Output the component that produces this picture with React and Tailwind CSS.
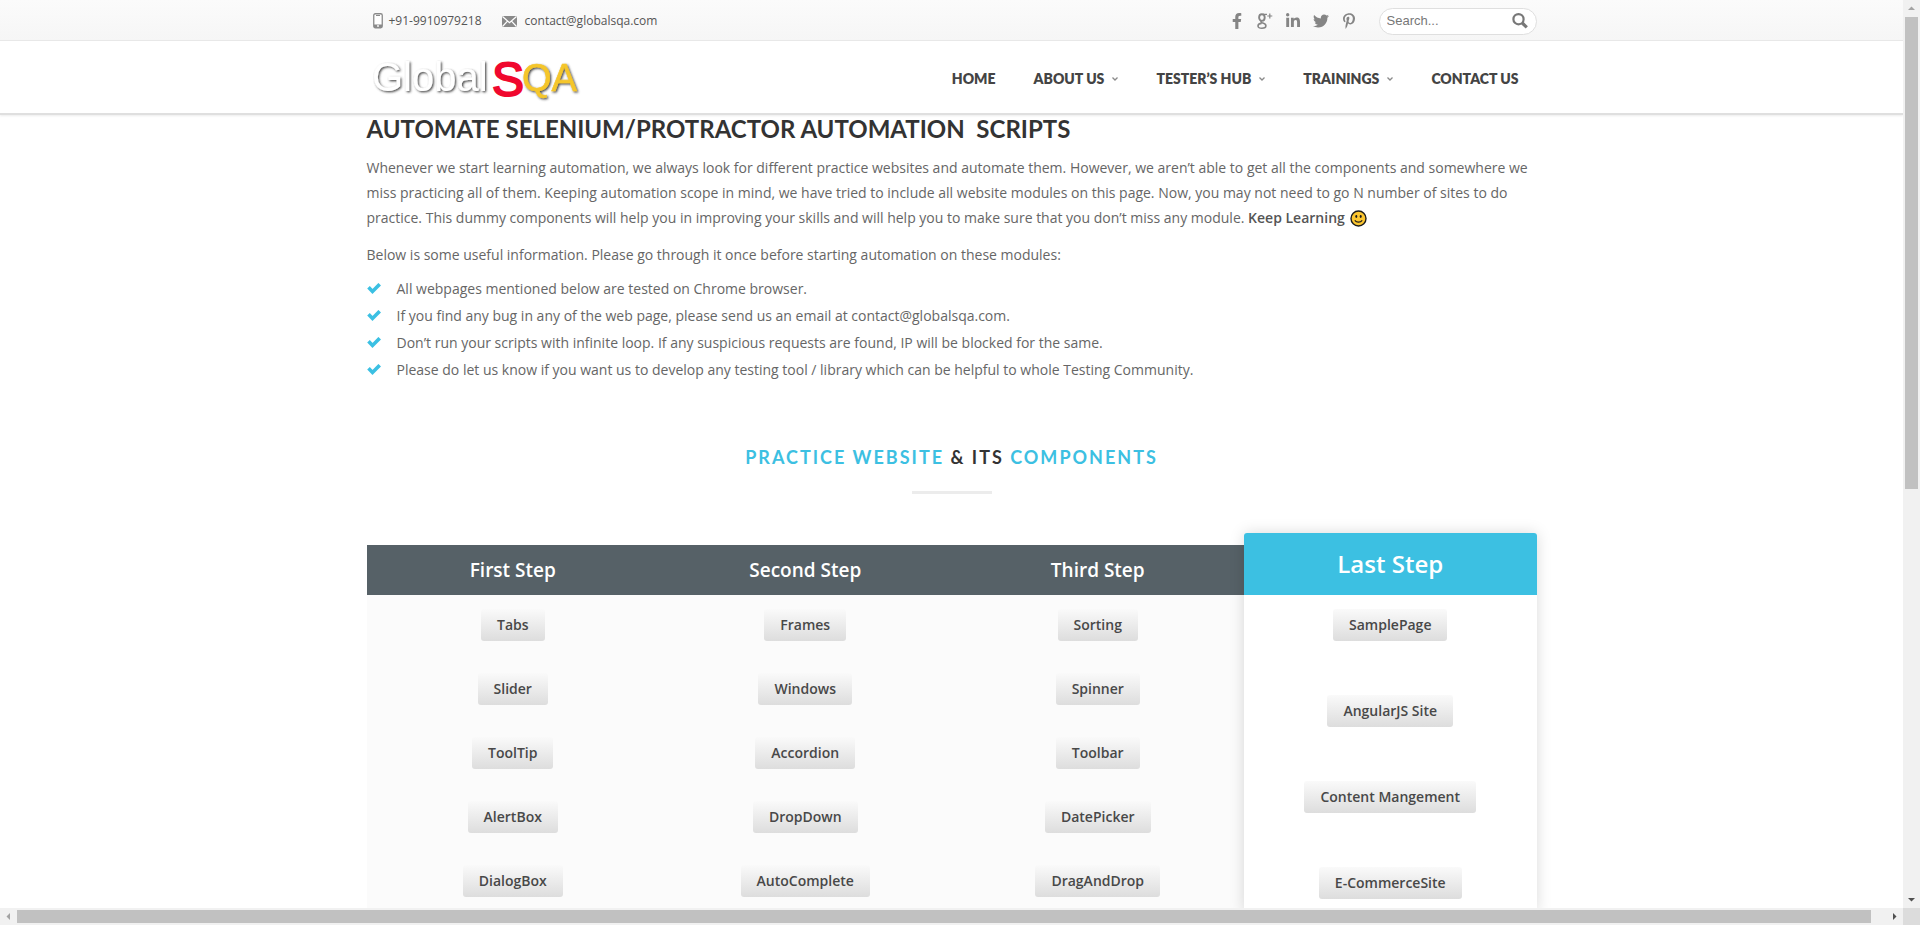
import React from "react";
import { FaFacebookF, FaLinkedinIn, FaTwitter, FaPinterestP } from "react-icons/fa";

const navItems = [
  { label: "HOME", menu: false },
  { label: "ABOUT US", menu: true },
  { label: "TESTER’S HUB", menu: true },
  { label: "TRAININGS", menu: true },
  { label: "CONTACT US", menu: false },
];

const notes = [
  "All webpages mentioned below are tested on Chrome browser.",
  "If you find any bug in any of the web page, please send us an email at contact@globalsqa.com.",
  "Don’t run your scripts with infinite loop. If any suspicious requests are found, IP will be blocked for the same.",
  "Please do let us know if you want us to develop any testing tool / library which can be helpful to whole Testing Community.",
];

const steps = [
  { title: "First Step", links: ["Tabs", "Slider", "ToolTip", "AlertBox", "DialogBox"] },
  { title: "Second Step", links: ["Frames", "Windows", "Accordion", "DropDown", "AutoComplete"] },
  { title: "Third Step", links: ["Sorting", "Spinner", "Toolbar", "DatePicker", "DragAndDrop"] },
];

const lastStep = ["SamplePage", "AngularJS Site", "Content Mangement", "E-CommerceSite"];

function PhoneIcon() {
  return (
    <svg className="h-4 w-[10px]" viewBox="0 0 10 16" aria-hidden="true">
      <rect x="0.75" y="0.75" width="8.5" height="14" rx="1.5" fill="#fff" stroke="#8a8a8a" strokeWidth="1.3" />
      <path d="M1 11.5h8v2.5a1 1 0 0 1-1 1H2a1 1 0 0 1-1-1z" fill="#8a8a8a" />
      <path d="M3 2.5h4" stroke="#8a8a8a" strokeWidth="1" />
      <circle cx="5" cy="13" r="0.9" fill="#fff" />
    </svg>
  );
}

function MailIcon() {
  return (
    <svg className="h-[11px] w-[15px]" viewBox="0 0 15 11" aria-hidden="true">
      <rect width="15" height="11" rx="1" fill="#8a8a8a" />
      <path d="M0.5 0.5 7.5 6.7l7-6.2M0.5 10.5l5-5.4M14.5 10.5l-5-5.4" fill="none" stroke="#fff" strokeWidth="1.2" />
    </svg>
  );
}

function GooglePlusIcon() {
  return (
    <svg className="h-4 w-4" viewBox="0 0 16 16" fill="none" stroke="#858585" aria-hidden="true">
      <ellipse cx="4.9" cy="4.6" rx="2.8" ry="3.3" strokeWidth="1.9" />
      <path d="M6 1.4h4" strokeWidth="1.3" />
      <path d="M4.6 7.9C3.6 8.7 4 9.4 5.2 9.8c2 .6 3.7 1.2 3.7 2.9 0 1.5-1.6 2.5-4 2.5S1 14.3 1 12.9c0-1.5 1.5-2.4 3.6-2.5" strokeWidth="1.6" />
      <path d="M12.8 0.5v5M10.3 3h5" strokeWidth="1.2" />
    </svg>
  );
}

function SearchIcon() {
  return (
    <svg className="h-4 w-4" viewBox="0 0 16 16" fill="none" stroke="#787878" aria-hidden="true">
      <circle cx="6.5" cy="6.2" r="5.1" strokeWidth="2.2" />
      <path d="m10.2 10 4.6 4.3" strokeWidth="3.2" />
    </svg>
  );
}

function CheckIcon() {
  return (
    <svg className="h-[11px] w-[14px] shrink-0" viewBox="0 0 14 11" aria-hidden="true">
      <path d="m1.5 4.2 4 4.2 7.2-7.2" fill="none" stroke="#3bc0e3" strokeWidth="3.6" />
    </svg>
  );
}

function SmileIcon() {
  return (
    <svg className="ml-[2px] inline h-[17px] w-[17px] align-[-4px]" viewBox="0 0 17 17" role="img" aria-label="smile">
      <circle cx="8.5" cy="8.5" r="7.5" fill="#fcc630" stroke="#1c1c1c" strokeWidth="1.4" />
      <ellipse cx="6.3" cy="6.5" rx="1" ry="1.4" fill="#1c1c1c" />
      <ellipse cx="10.7" cy="6.5" rx="1" ry="1.4" fill="#1c1c1c" />
      <path d="M4.8 10.4c1.8 2.4 5.6 2.4 7.4 0" fill="none" stroke="#1c1c1c" strokeWidth="1.2" />
    </svg>
  );
}

function Logo() {
  return (
    <svg className="h-[60px] w-[216px]" viewBox="0 0 216 60" role="img" aria-label="GlobalSQA">
      <defs>
        <filter id="shade" x="-10%" y="-10%" width="120%" height="130%">
          <feDropShadow dx="1.2" dy="1.2" stdDeviation="0.8" floodColor="#3a3a3a" floodOpacity="0.95" />
        </filter>
      </defs>
      <g fontFamily="'Liberation Sans', Arial, sans-serif">
        <g filter="url(#shade)">
          <text x="5" y="42" fontSize="40" fill="#fff">Global</text>
          <text x="155" y="42" fontSize="38" fill="#f5c62c" stroke="#f5c62c" strokeWidth="0.6">QA</text>
        </g>
        <text x="125" y="47" fontSize="48" fill="#f0082e" stroke="#f0082e" strokeWidth="2">S</text>
      </g>
    </svg>
  );
}

function StepLink({ children }) {
  return (
    <a
      href="#"
      className="block h-8 rounded-[3px] bg-linear-to-b from-[#fafafa] to-[#dddddd] px-4 text-sm leading-8 font-semibold text-[#484848]"
    >
      {children}
    </a>
  );
}

function TopBar() {
  return (
    <div className="border-b border-[#e9e9e9] bg-linear-to-b from-[#fbfbfb] to-[#f6f6f6]">
      <div className="mx-auto flex h-10 max-w-[1170px] items-center justify-between pt-[2px]">
        <div className="flex items-center pl-[6px] text-xs text-[#555]">
          <PhoneIcon />
          <span className="ml-[6px]">+91-9910979218</span>
          <span className="ml-5"><MailIcon /></span>
          <a href="mailto:contact@globalsqa.com" className="ml-2">contact@globalsqa.com</a>
        </div>
        <div className="flex items-center text-base text-[#858585]">
          <div className="mr-[22px] flex items-center gap-3">
            <a href="#" aria-label="Facebook"><FaFacebookF /></a>
            <a href="#" aria-label="Google Plus"><GooglePlusIcon /></a>
            <a href="#" aria-label="LinkedIn"><FaLinkedinIn /></a>
            <a href="#" aria-label="Twitter"><FaTwitter /></a>
            <a href="#" aria-label="Pinterest"><FaPinterestP /></a>
          </div>
          <form className="flex h-[27px] w-[158px] items-center rounded-full border border-[#dfdfdf] bg-white pr-2 pl-[7px]">
            <input
              type="text"
              aria-label="Search"
              placeholder="Search..."
              className="min-w-0 flex-1 bg-transparent font-['Liberation_Sans',Arial,sans-serif] text-[13px] text-[#777] outline-none placeholder:text-[#777]"
            />
            <button type="button" aria-label="Submit search"><SearchIcon /></button>
          </form>
        </div>
      </div>
    </div>
  );
}

function Header() {
  return (
    <header className="border-b-2 border-[#dfdfdf] bg-white shadow-[0_1px_2px_rgba(0,0,0,0.08)]">
      <div className="mx-auto flex h-[72px] max-w-[1170px] items-center justify-between pt-1">
        <a href="#"><Logo /></a>
        <nav className="flex items-center gap-[38px] pr-[18px] font-[Lato,sans-serif] text-sm font-extrabold text-[#444]">
          {navItems.map((item) => (
            <a key={item.label} href="#" className="flex items-center gap-2 whitespace-nowrap">
              {item.label}
              {item.menu && (
                <svg className="h-1 w-[6px]" viewBox="0 0 6 4" fill="none" stroke="#8a8a8a" aria-hidden="true">
                  <path d="m0.5 0.5 2.5 2.5L5.5 0.5" strokeWidth="1.3" />
                </svg>
              )}
            </a>
          ))}
        </nav>
      </div>
    </header>
  );
}

function StepsTable() {
  return (
    <div className="grid grid-cols-4 items-start">
      {steps.map((step) => (
        <section key={step.title} className="mt-3 bg-[#fbfbfb] text-center">
          <h3 className="h-[50px] bg-[#566167] text-[19px] leading-[50px] font-semibold text-white">{step.title}</h3>
          <ul className="flex flex-col items-center gap-8 py-[14px]">
            {step.links.map((l) => (
              <li key={l}><StepLink>{l}</StepLink></li>
            ))}
          </ul>
        </section>
      ))}
      <section className="rounded-[3px] bg-white text-center shadow-[0_0_15px_rgba(0,0,0,0.15)]">
        <h3 className="h-[62px] rounded-t-[3px] bg-[#3cc0e2] text-2xl leading-[62px] font-semibold text-white">Last Step</h3>
        <ul className="flex flex-col items-center gap-[54px] py-[14px]">
          {lastStep.map((l) => (
            <li key={l}><StepLink>{l}</StepLink></li>
          ))}
        </ul>
      </section>
    </div>
  );
}

function Arrow({ points, color }) {
  return (
    <svg className="h-[7px] w-[7px]" viewBox="0 0 7 7" aria-hidden="true">
      <polygon points={points} fill={color} />
    </svg>
  );
}

export default function App() {
  return (
    <div className="grid h-screen grid-cols-[minmax(0,1fr)_17px] grid-rows-[minmax(0,1fr)_17px] overflow-hidden bg-white font-['Open_Sans',sans-serif] text-sm text-[#666]">
      <div className="overflow-hidden">
        <TopBar />
        <Header />
        <main className="mx-auto max-w-[1170px]">
          <h1 className="h-7 font-[Lato,sans-serif] text-2xl leading-7 font-bold whitespace-pre text-[#333]">
            {"AUTOMATE SELENIUM/PROTRACTOR AUTOMATION  SCRIPTS"}
          </h1>
          <p className="mt-3 leading-[25px]">
            Whenever we start learning automation, we always look for different practice websites and automate them.
            However, we aren’t able to get all the components and somewhere we miss practicing all of them. Keeping
            automation scope in mind, we have tried to include all website modules on this page. Now, you may not need to
            go N number of sites to do practice. This dummy components will help you in improving your skills and will help
            you to make sure that you don’t miss any module.{" "}
            <strong className="font-semibold text-[#555]">Keep Learning</strong> <SmileIcon />
          </p>
          <p className="mt-3 leading-[25px]">
            Below is some useful information. Please go through it once before starting automation on these modules:
          </p>
          <ul className="mt-2">
            {notes.map((note) => (
              <li key={note} className="flex items-center gap-4 leading-[27px]">
                <CheckIcon />
                {note}
              </li>
            ))}
          </ul>
          <h2 className="mt-[60px] text-center font-[Lato,sans-serif] text-lg leading-7 font-bold tracking-[2px] text-[#3cc0e2]">
            PRACTICE WEBSITE <span className="text-[#333]">&amp; ITS</span> COMPONENTS
          </h2>
          <div className="mx-auto mt-5 mb-[39px] h-[3px] w-20 bg-[#ececec]" />
          <StepsTable />
        </main>
      </div>
      <div className="flex flex-col items-center bg-[#f1f1f1]" aria-hidden="true">
        <div className="flex h-[17px] items-center"><Arrow points="0,5 3.5,1.5 7,5" color="#a3a3a3" /></div>
        <div className="h-[52%] w-[13px] bg-[#c1c1c1]" />
        <div className="mt-auto flex h-[17px] items-center"><Arrow points="0,2 3.5,5.5 7,2" color="#505050" /></div>
      </div>
      <div className="flex items-center bg-[#f1f1f1]" aria-hidden="true">
        <div className="flex w-[17px] justify-center"><Arrow points="5,0 1.5,3.5 5,7" color="#a3a3a3" /></div>
        <div className="flex-1 pr-[15px]"><div className="h-[13px] bg-[#c1c1c1]" /></div>
        <div className="flex w-[17px] justify-center"><Arrow points="2,0 5.5,3.5 2,7" color="#505050" /></div>
      </div>
      <div className="bg-[#dcdcdc]" />
    </div>
  );
}
